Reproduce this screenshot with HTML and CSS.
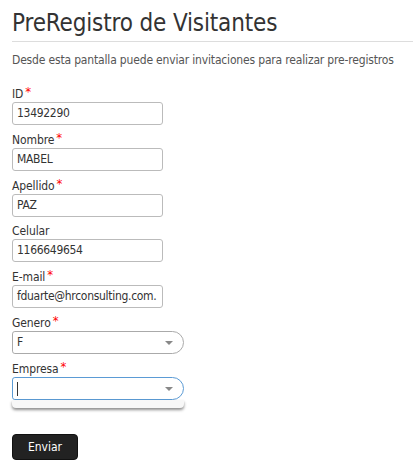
FILE: index.html
```html
<!DOCTYPE html>
<html>
<head>
<meta charset="utf-8">
<link rel="stylesheet" href="styles.css">
</head>
<body>
<div class="page">
  <h1 class="title">PreRegistro de Visitantes</h1>
  <hr class="rule">
  <p class="intro">Desde esta pantalla puede enviar invitaciones para realizar pre-registros</p>
  <form class="form">
    <div class="field">
      <label class="label">ID<span class="req">*</span></label>
      <div class="input">13492290</div>
    </div>
    <div class="field">
      <label class="label">Nombre<span class="req">*</span></label>
      <div class="input">MABEL</div>
    </div>
    <div class="field">
      <label class="label">Apellido<span class="req">*</span></label>
      <div class="input">PAZ</div>
    </div>
    <div class="field">
      <label class="label">Celular</label>
      <div class="input">1166649654</div>
    </div>
    <div class="field">
      <label class="label">E-mail<span class="req">*</span></label>
      <div class="input">fduarte@hrconsulting.com.</div>
    </div>
    <div class="field">
      <label class="label">Genero<span class="req">*</span></label>
      <div class="select"><span>F</span><span class="arrow"></span></div>
    </div>
    <div class="field">
      <label class="label">Empresa<span class="req">*</span></label>
      <div class="select-wrap">
        <div class="select focus"><span class="caret"></span><span class="arrow"></span></div>
        <div class="dropdown"></div>
      </div>
    </div>
    <div class="actions">
      <button type="button" class="btn">Enviar</button>
    </div>
  </form>
</div>
</body>
</html>
```
FILE: styles.css
```css
html, body {
  margin: 0;
  padding: 0;
  background: #fff;
}
body {
  font-family: "DejaVu Sans Condensed", "DejaVu Sans", sans-serif;
  color: #333;
  font-size: 12px;
}
.page {
  padding: 8px 0 0 12px;
}
.title {
  margin: 0;
  font-size: 24px;
  font-weight: normal;
  line-height: 30px;
  color: #333;
  letter-spacing: -0.15px;
}
.rule {
  margin: 3px 0 0 0;
  border: 0;
  border-top: 1px solid #ddd;
  height: 0;
}
.intro {
  margin: 9px 0 0 0;
  line-height: 18px;
  color: #555;
  letter-spacing: -0.17px;
}
.form {
  margin-top: 17px;
  display: flex;
  flex-direction: column;
  gap: 7px;
}
.field {
  display: flex;
  flex-direction: column;
}
.label {
  line-height: 15px;
  color: #333;
  letter-spacing: -0.1px;
}
.req {
  color: #f00;
  font-size: 13px;
  margin-left: 2px;
  position: relative;
  top: -2px;
}
.input {
  box-sizing: border-box;
  width: 151px;
  height: 23px;
  border: 1px solid #bbb;
  border-radius: 3px;
  padding: 0 4px;
  line-height: 21px;
  color: #333;
  white-space: nowrap;
  overflow: hidden;
  letter-spacing: -0.3px;
}
.select-wrap {
  position: relative;
  width: 172px;
}
.select {
  box-sizing: border-box;
  width: 172px;
  height: 23px;
  border: 1px solid #aaa;
  border-radius: 3px 12px 12px 3px;
  padding: 0 4px;
  line-height: 21px;
  display: flex;
  align-items: center;
  justify-content: space-between;
}
.select.focus {
  border-color: #5b9bd5;
}
.arrow {
  width: 0;
  height: 0;
  border-left: 4px solid transparent;
  border-right: 4px solid transparent;
  border-top: 4px solid #888;
  margin-right: 6px;
}
.caret {
  display: block;
  width: 1px;
  height: 14px;
  background: #333;
}
.dropdown {
  position: absolute;
  left: 0;
  top: 23px;
  width: 172px;
  height: 8px;
  box-sizing: border-box;
  background: #f7f7f7;
  border-radius: 0 0 4px 4px;
  box-shadow: 0 2px 3px rgba(0,0,0,0.45);
}
.actions {
  margin-top: 27px;
}
.btn {
  box-sizing: border-box;
  width: 66px;
  height: 26px;
  background: #222;
  color: #fff;
  border: 1px solid #111;
  border-radius: 4px;
  font-family: "DejaVu Sans Condensed", "DejaVu Sans", sans-serif;
  font-size: 12px;
  padding: 0;
}
```
